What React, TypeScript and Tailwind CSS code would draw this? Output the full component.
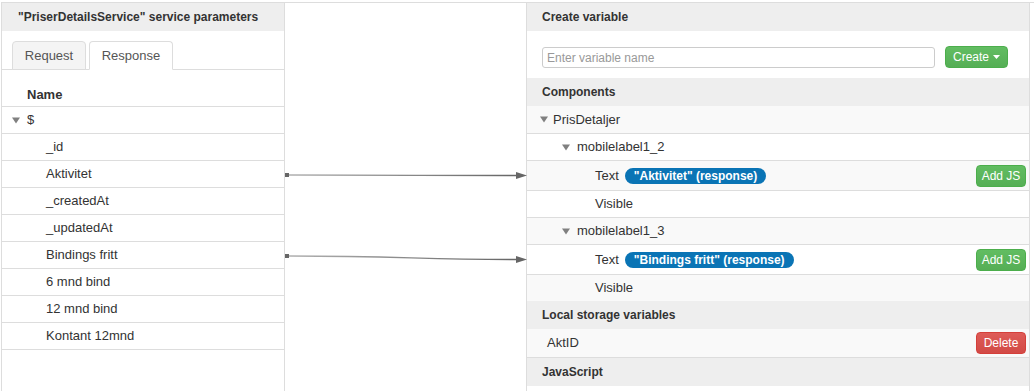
import React from 'react';

const Caret: React.FC<{ className?: string }> = ({ className }) => (
  <svg width="8" height="7" viewBox="0 0 8 7" className={className}>
    <polygon points="0,0.5 8,0.5 4,6.5" fill="#808080" />
  </svg>
);

const leftRows = ['_id', 'Aktivitet', '_createdAt', '_updatedAt', 'Bindings fritt', '6 mnd bind', '12 mnd bind', 'Kontant 12mnd'];

const SectionHeader: React.FC<{ title: string; h?: string }> = ({ title, h = 'h-[28px]' }) => (
  <div className={`${h} bg-[#eeeeee] pl-[15px] flex items-center text-[12px] font-bold text-[#333]`}>{title}</div>
);

const Badge: React.FC<{ text: string }> = ({ text }) => (
  <span className="ml-[6px] h-[16px] px-[9px] rounded-full bg-[#0a74b5] text-white text-[12px] font-bold flex items-center leading-none">
    {text}
  </span>
);

const GreenBtn: React.FC<{ children: React.ReactNode; className?: string }> = ({ children, className }) => (
  <button className={`h-[22px] rounded-[4px] border border-[#4cae4c] bg-gradient-to-b from-[#62bd62] to-[#55ae55] text-white text-[12px] flex items-center justify-center leading-none ${className ?? ''}`}>
    {children}
  </button>
);

const App: React.FC = () => {
  return (
    <div className="relative w-[1034px] h-[391px] bg-white overflow-hidden font-['Liberation_Sans',Arial,sans-serif] text-[#333] pt-[2px] pl-[1px]">
      <div className="flex h-full border-t border-[#dddddd]">
        {/* Left panel */}
        <div className="w-[284px] h-full border-l border-r border-[#dddddd] flex flex-col">
          <div className="h-[28px] bg-[#eeeeee] pl-[16px] flex items-center text-[12px] font-bold">
            "PriserDetailsService" service parameters
          </div>
          <div className="pt-[10px] pl-[10px] border-b border-[#dddddd] flex gap-[3px]">
            <div className="w-[74px] h-[29px] -mb-px flex items-center justify-center border border-[#dddddd] rounded-t-[4px] bg-[#f4f4f4] text-[13px] text-[#555]">
              Request
            </div>
            <div className="w-[84px] h-[29px] -mb-px flex items-center justify-center border border-[#dddddd] border-b-white rounded-t-[4px] bg-white text-[13px] text-[#555]">
              Response
            </div>
          </div>
          <div className="h-[37px] border-b border-[#dddddd] pl-[25px] pt-[15px] text-[13px] font-bold">Name</div>
          <div className="h-[27px] border-b border-[#dddddd] pl-[10px] flex items-center gap-[7px] text-[13px]">
            <Caret />
            <span>$</span>
          </div>
          {leftRows.map((r) => (
            <div key={r} className="h-[27px] border-b border-[#dddddd] pl-[44px] flex items-center text-[13px]">
              {r}
            </div>
          ))}
        </div>

        {/* Middle */}
        <div className="w-[241px] h-full" />

        {/* Right panel */}
        <div className="w-[504px] h-full border-l border-r border-[#dddddd] flex flex-col">
          <SectionHeader title="Create variable" />
          <div className="h-[47px] pl-[15px] pr-[21px] pt-[15px] flex items-start gap-[10px]">
            <div className="flex-1 h-[21px] mt-[1px] border border-[#cccccc] rounded-[3px] pl-[4px] flex items-center text-[12px] text-[#999]">
              Enter variable name
            </div>
            <GreenBtn className="w-[63px] gap-[4px]">
              Create
              <svg width="7" height="4" viewBox="0 0 7 4"><polygon points="0,0 7,0 3.5,4" fill="#fff" /></svg>
            </GreenBtn>
          </div>
          <SectionHeader title="Components" />
          <div className="h-[27px] bg-[#f9f9f9] pl-[13px] flex items-center gap-[5px] text-[13px]">
            <Caret />
            <span>PrisDetaljer</span>
          </div>
          <div className="h-[27px] border-t border-[#dddddd] pl-[35px] flex items-center gap-[7px] text-[13px]">
            <Caret />
            <span>mobilelabel1_2</span>
          </div>
          <div className="h-[30px] border-t border-[#dddddd] bg-[#f9f9f9] pl-[68px] pr-[3px] flex items-center text-[13px]">
            <span>Text</span>
            <Badge text={'"Aktivitet" (response)'} />
            <GreenBtn className="ml-auto w-[50px]">Add JS</GreenBtn>
          </div>
          <div className="h-[27px] border-t border-[#dddddd] pl-[68px] flex items-center text-[13px]">Visible</div>
          <div className="h-[27px] border-t border-[#dddddd] bg-[#f9f9f9] pl-[35px] flex items-center gap-[7px] text-[13px]">
            <Caret />
            <span>mobilelabel1_3</span>
          </div>
          <div className="h-[30px] border-t border-[#dddddd] pl-[68px] pr-[3px] flex items-center text-[13px]">
            <span>Text</span>
            <Badge text={'"Bindings fritt" (response)'} />
            <GreenBtn className="ml-auto w-[50px]">Add JS</GreenBtn>
          </div>
          <div className="h-[27px] border-t border-[#dddddd] bg-[#f9f9f9] pl-[68px] flex items-center text-[13px]">Visible</div>
          <SectionHeader title="Local storage variables" />
          <div className="h-[29px] bg-[#f9f9f9] border-b border-[#dddddd] pl-[20px] pr-[3px] flex items-center text-[13px]">
            <span>AktID</span>
            <button className="ml-auto w-[50px] h-[22px] rounded-[4px] border border-[#d43f3a] bg-gradient-to-b from-[#de5b57] to-[#d24a46] text-white text-[12px] leading-none">
              Delete
            </button>
          </div>
          <SectionHeader title="JavaScript" />
        </div>
      </div>

      {/* Connectors */}
      <svg className="absolute left-0 top-0 pointer-events-none" width="1034" height="391">
        <defs>
          <linearGradient id="ln" x1="0" x2="1" y1="0" y2="0">
            <stop offset="0" stopColor="#b0b0b0" />
            <stop offset="1" stopColor="#666666" />
          </linearGradient>
        </defs>
        <rect x="285" y="173" width="4" height="4" fill="#666" />
        <path d="M289 175 C 400 175, 420 175.5, 517 175.5" stroke="url(#ln)" strokeWidth="1.3" fill="none" />
        <polygon points="516,172 527,175.5 516,179" fill="#666" />
        <rect x="285" y="254" width="4" height="4" fill="#666" />
        <path d="M289 256 C 400 256, 420 259.5, 517 259.5" stroke="url(#ln)" strokeWidth="1.3" fill="none" />
        <polygon points="516,256 527,259.5 516,263" fill="#666" />
      </svg>
    </div>
  );
};

export default App;
